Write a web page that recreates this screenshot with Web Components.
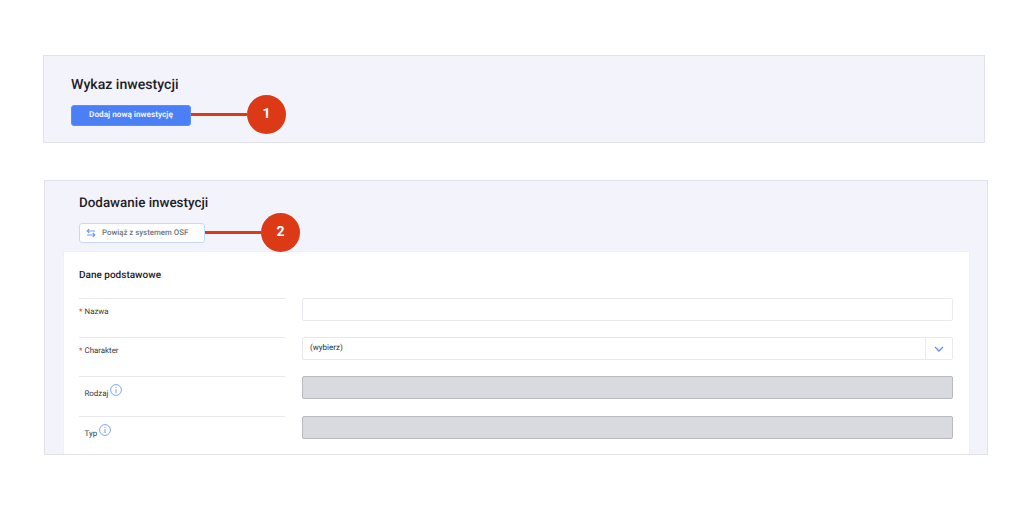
<!DOCTYPE html>
<html lang="pl"><head><meta charset="utf-8"><title>Inwestycje</title>
<style>
html,body{margin:0;padding:0;background:#fff}
body{font-family:Roboto,"Liberation Sans",sans-serif;text-rendering:geometricPrecision;width:1024px;height:506px;overflow:hidden;padding-top:55px;box-sizing:border-box}
</style></head><body>
<x-panel style="margin-left:43px;width:942px;height:88px;padding:21px 27px 0;--title:14.1px;--tm:-1px;--tb:1px" title="Wykaz inwestycji">
  <x-callout n="1" len="56"><x-button primary>Dodaj nową inwestycję</x-button></x-callout>
</x-panel>
<x-panel style="margin-left:44px;margin-top:37px;width:944px;height:275px;padding:14px 18px 0 34px;--title:13.4px;--tm:0px;--tb:0px" title="Dodawanie inwestycji">
  <x-callout n="2" len="56"><x-button icon>Powiąż z systemem OSF</x-button></x-callout>
  <x-card heading="Dane podstawowe" slot="after">
    <x-row label="Nazwa" required><x-input></x-input></x-row>
    <x-row label="Charakter" required><x-input select value="(wybierz)"></x-input></x-row>
    <x-row label="Rodzaj" info style="height:40px"><x-input disabled></x-input></x-row>
    <x-row label="Typ" info><x-input disabled></x-input></x-row>
  </x-card>
</x-panel>
<script>
function def(name,html){customElements.define(name,class extends HTMLElement{
  connectedCallback(){if(this.shadowRoot)return;const s=this.attachShadow({mode:'open'});s.innerHTML=html(this);}
});}
def('x-panel',e=>`<style>
:host{display:block;box-sizing:border-box;background:#f3f4fb;border:1px solid #e2e3e8;position:relative;color:#1e2026}
h2{margin:var(--tm) 0 var(--tb);font:500 var(--title)/18px Roboto,sans-serif}
.top{display:block}
.after{display:block;margin:-1px 0 0 -16px}
</style><h2>${e.getAttribute('title')}</h2><div class="top"><slot></slot></div><div class="after"><slot name="after"></slot></div>`);
def('x-callout',e=>`<style>
:host{display:flex;align-items:center;position:relative;width:max-content}
.line{width:${e.getAttribute('len')}px;height:3px;background:#dc3a16}
.dot{width:39px;height:39px;border-radius:50%;background:#dc3a16;color:#fff;font:700 14px/39px Roboto,sans-serif;text-align:center}
</style><slot></slot><span class="line"></span><span class="dot">${e.getAttribute('n')}</span>`);
def('x-button',e=>`<style>
:host{display:flex;align-items:center;box-sizing:border-box;border-radius:3px;font:500 8.2px/1 Roboto,sans-serif}
:host([primary]){width:120px;height:21px;margin-top:2px;justify-content:center;font-weight:700;background:#4b7ff5;color:#eef2ff;border:1px solid #5f8df6}
:host([icon]){width:126px;height:20px;background:#fff;color:#6f7580;border:1px solid #c9d8f7;padding-left:6px;gap:6px;font-size:7.85px}
svg{width:10px;height:10px;flex:none}
</style>${e.hasAttribute('icon')?`<svg viewBox="0 0 10 10" fill="none" stroke="#6f9cf5" stroke-width="1.1"><path d="M9 3H1.5M3.2 1L1.2 3L3.2 5M1 7H8.5M6.8 5L8.8 7L6.8 9"/></svg>`:''}<slot></slot>`);
def('x-card',e=>`<style>
:host{display:block;box-sizing:border-box;width:907px;height:203px;background:#fff;border:1px solid #f0f0f4;border-bottom:0;padding:18px 16px 0 15px;font-family:Roboto,sans-serif}
h3{margin:0 0 16px;font:500 10px/12px Roboto,sans-serif;color:#1e2026}
</style><h3>${e.getAttribute('heading')}</h3><slot></slot>`);
def('x-row',e=>`<style>
:host{display:grid;grid-template-columns:206px 651px;column-gap:17px;height:39px;font:400 7.9px/1 Roboto,sans-serif;color:#33363d}
.l{border-top:1px solid #e8e9ee;display:flex;align-items:flex-start;padding-top:${e.hasAttribute('info')?'7px':'9px'};box-sizing:border-box}
.star{width:5.5px;color:#dc3a16}
.t{margin-left:${e.hasAttribute('required')?'0':'5.5px'};padding-top:${e.hasAttribute('info')?'6px':'0'}}
svg{width:12px;height:12px;margin:0 0 0 2px}
</style><div class="l">${e.hasAttribute('required')?'<span class="star">*</span>':''}<span class="t">${e.getAttribute('label')}</span>${e.hasAttribute('info')?'<svg viewBox="0 0 12 12" fill="none" stroke="#6f9cf5"><circle cx="6" cy="6" r="5.4" stroke-width=".9"/><path d="M6 5.2V9M6 3V4" stroke-width="1"/></svg>':''}</div><div><slot></slot></div>`);
def('x-input',e=>`<style>
:host{display:flex;box-sizing:border-box;height:23px;border-radius:2px;border:1px solid #e9eaef;background:#fff;font:400 8px/19px Roboto,sans-serif;color:#2b2d33}
:host([disabled]){background:#d9dadf;border-color:#b9babf}
.v{flex:1;padding-left:7px}
.c{width:26px;border-left:1px solid #e9eaef;display:flex;align-items:center;justify-content:center}
svg{width:10px;height:6px}
</style><span class="v">${e.getAttribute('value')||''}</span>${e.hasAttribute('select')?'<span class="c"><svg viewBox="0 0 10 6" fill="none" stroke="#5c8ff5" stroke-width="1.3"><path d="M1 1L5 5L9 1"/></svg></span>':''}`);
</script>
</body></html>
